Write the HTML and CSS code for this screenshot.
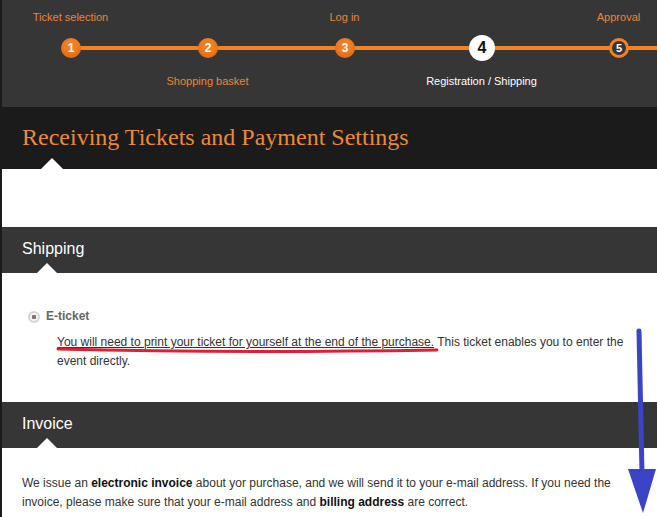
FILE: index.html
```html
<!DOCTYPE html>
<html lang="en">
<head>
  <meta charset="UTF-8">
  <title>Receiving Tickets and Payment Settings</title>
  <link rel="stylesheet" href="styles.css">
</head>
<body>
  <div class="page">

    <div class="etapes">
      <div class="etape fait">
        <span class="label haut">Ticket selection</span>
        <span class="rond">1</span>
      </div>
      <div class="etape fait">
        <span class="rond">2</span>
        <span class="label bas">Shopping basket</span>
      </div>
      <div class="etape fait">
        <span class="label haut">Log in</span>
        <span class="rond">3</span>
      </div>
      <div class="etape actif">
        <span class="rond">4</span>
        <span class="label bas">Registration / Shipping</span>
      </div>
      <div class="etape suivant">
        <span class="label haut">Approval</span>
        <span class="rond">5</span>
      </div>
    </div>

    <h1 class="titre">Receiving Tickets and Payment Settings</h1>
    <div class="vide"></div>

    <h2 class="section">Shipping</h2>
    <div class="bloc livraison">
      <label class="choix"><span class="radio"></span>E-ticket</label>
      <p class="desc"><span class="souligne">You will need to print your ticket for yourself at the end of the purchase.</span> This ticket enables you to enter the event directly.</p>
    </div>

    <h2 class="section">Invoice</h2>
    <div class="bloc facture">
      <p>We issue an <strong>electronic invoice</strong> about yor purchase, and we will send it to your e-mail address. If you need the invoice, please make sure that your e-mail address and <strong>billing address</strong> are correct.</p>
    </div>

    <!-- annotations dessinees par dessus -->
    <svg class="trait-rouge" width="384" height="8" viewBox="0 0 384 8">
      <path d="M2 3 C 120 6, 260 6, 381 4" stroke="#e01f36" stroke-width="3" fill="none" stroke-linecap="round"/>
    </svg>
    <svg class="fleche" width="32" height="190" viewBox="0 0 32 190">
      <path d="M12 3 L15 145" stroke="#3b44c6" stroke-width="5" fill="none" stroke-linecap="round"/>
      <path d="M1 141 L29 141 L16 185 Z" fill="#3b44c6"/>
    </svg>
  </div>
</body>
</html>
```

FILE: styles.css
```css
body {
  margin: 0;
  background: #1b1b1b;
  font-family: "Liberation Sans", Arial, sans-serif;
  overflow: hidden;
}

.page {
  margin-left: 2px;
  position: relative;
  background: #fff;
  min-height: 517px;
}

/* Etapes */
.etapes {
  display: flex;
  height: 107px;
  background: #363636;
  overflow: hidden;
}

.etape {
  flex: 0 0 137px;
  position: relative;
  display: flex;
  flex-direction: column;
  align-items: center;
}

.etape::before {
  content: "";
  position: absolute;
  top: 46px;
  left: 0;
  right: 0;
  height: 4px;
  background: #f38221;
}

.etape:first-child::before {
  left: 50%;
}

.label {
  position: absolute;
  left: 0;
  right: 0;
  text-align: center;
  font-size: 11px;
  color: #ec8535;
  white-space: nowrap;
}

.label.haut {
  top: 11px;
}

.label.bas {
  top: 75px;
}

.actif .label {
  color: #fff;
}

.rond {
  position: absolute;
  top: 38px;
  left: 59px;
  width: 20px;
  height: 20px;
  border-radius: 50%;
  background: #f27e22;
  box-shadow: inset 0 -3px 4px rgba(190, 70, 0, 0.35);
  color: #fff;
  font-size: 12px;
  font-weight: bold;
  line-height: 20px;
  text-align: center;
}

.actif .rond {
  top: 35px;
  left: 56px;
  width: 26px;
  height: 26px;
  line-height: 26px;
  background: #fff;
  box-shadow: none;
  color: #111;
  font-size: 16px;
}

.suivant .rond {
  top: 38px;
  left: 59px;
  width: 14px;
  height: 14px;
  line-height: 14px;
  border: 3px solid #f38221;
  background: #363636;
  box-shadow: none;
  font-size: 11px;
}

/* Titre */
.titre {
  margin: 0;
  height: 62px;
  line-height: 60px;
  padding-left: 20px;
  background: #1b1b1b;
  color: #ec8a3a;
  font-family: "Liberation Serif", Georgia, serif;
  font-weight: normal;
  font-size: 24px;
  position: relative;
}

.titre::after,
.section::after {
  content: "";
  position: absolute;
  bottom: 0;
  border-left: 11px solid transparent;
  border-right: 11px solid transparent;
  border-bottom: 11px solid #fff;
}

.titre::after {
  left: 39px;
}

.vide {
  height: 58px;
}

/* Sections */
.section {
  margin: 0;
  height: 46px;
  line-height: 44px;
  padding-left: 20px;
  background: #363636;
  color: #fff;
  font-size: 16px;
  font-weight: normal;
  position: relative;
}

.section::after {
  left: 35px;
  border-left-width: 10px;
  border-right-width: 10px;
  border-bottom-width: 10px;
}

.bloc {
  font-size: 12px;
  line-height: 19px;
  color: #333;
}

.livraison {
  padding: 34px 22px 28px 26px;
  height: 67px;
}

.choix {
  display: flex;
  align-items: center;
  gap: 6px;
  font-weight: bold;
  color: #666;
}

.radio {
  width: 8px;
  height: 8px;
  border-radius: 50%;
  border: 2px solid #d4d4d4;
  background: radial-gradient(circle, #777 0 2px, #f4f4f4 2.5px);
}

.desc {
  margin: 7px 0 0 29px;
}

.souligne {
  text-decoration: underline;
}

.facture {
  padding: 26px 35px 0 20px;
}

.facture p {
  margin: 0;
}

.facture strong {
  color: #111;
}

/* Annotations */
.trait-rouge {
  position: absolute;
  left: 54px;
  top: 346px;
}

.fleche {
  position: absolute;
  left: 625px;
  top: 328px;
}
```
